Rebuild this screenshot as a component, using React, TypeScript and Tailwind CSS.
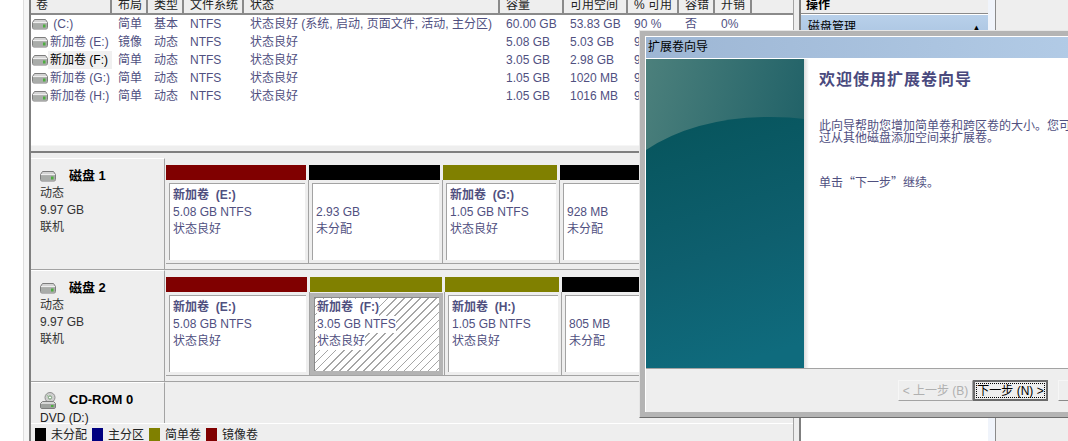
import React from "react";

const FONT = "[font-family:'Liberation_Sans','Noto_Sans_CJK_SC',sans-serif]";

function DiskIcon() {
  return (
    <svg width="16" height="11" viewBox="0 0 16 11" className="shrink-0">
      <path d="M2.5 0.5 H13.5 L15.5 3.5 V8.5 Q15.5 10 14 10 H2 Q0.5 10 0.5 8.5 V3.5 Z" fill="#d4d4d4" stroke="#7d7d7d" />
      <rect x="1" y="4" width="14" height="5.5" fill="#a9aca9" />
      <path d="M1 3.6 H15" stroke="#f2f2f2" />
      <rect x="11" y="5.5" width="2.5" height="3" fill="#4cae3f" />
    </svg>
  );
}

function CdIcon() {
  return (
    <svg width="16" height="17" viewBox="0 0 16 17" className="shrink-0">
      <circle cx="10" cy="5.5" r="5" fill="#cfcfcf" stroke="#8f8f8f" />
      <circle cx="10" cy="5.5" r="1.6" fill="#ffffff" stroke="#6f9a6f" />
      <path d="M6.5 3 L9 5" stroke="#8dbb8d" />
      <path d="M2.5 9.5 H13.5 L15.5 11.5 V15 Q15.5 16.5 14 16.5 H2 Q0.5 16.5 0.5 15 V11.5 Z" fill="#d8d8d8" stroke="#7d7d7d" />
      <rect x="1" y="12" width="14" height="4" fill="#9fa29f" />
      <rect x="11" y="13" width="2.5" height="2" fill="#4cae3f" />
    </svg>
  );
}

const headers = [
  ["卷", "w-[81px] pl-[5px]"],
  ["布局", "w-[36px] pl-[6px]"],
  ["类型", "w-[36px] pl-[6px]"],
  ["文件系统", "w-[60px] pl-[6px]"],
  ["状态", "w-[256px] pl-[6px]"],
  ["容量", "w-[64px] pl-[6px]"],
  ["可用空间", "w-[64px] pl-[6px]"],
  ["% 可用", "w-[51px] pl-[6px]"],
  ["容错", "w-[36px] pl-[6px]"],
  ["开销", "w-[37px] pl-[6px]"],
];

const rows = [
  [" (C:)", "简单", "基本", "NTFS", "状态良好 (系统, 启动, 页面文件, 活动, 主分区)", "60.00 GB", "53.83 GB", "90 %", "否", "0%"],
  ["新加卷 (E:)", "镜像", "动态", "NTFS", "状态良好", "5.08 GB", "5.03 GB", "99 %", "是", "50%"],
  ["新加卷 (F:)", "简单", "动态", "NTFS", "状态良好", "3.05 GB", "2.98 GB", "98 %", "否", "0%"],
  ["新加卷 (G:)", "简单", "动态", "NTFS", "状态良好", "1.05 GB", "1020 MB", "95 %", "否", "0%"],
  ["新加卷 (H:)", "简单", "动态", "NTFS", "状态良好", "1.05 GB", "1016 MB", "95 %", "否", "0%"],
];

type Part = { w: string; bar: string; name?: string; size: string; status: string; selected?: boolean };

const disk1: Part[] = [
  { w: "w-[143px]", bar: "bg-[#800000]", name: "新加卷  (E:)", size: "5.08 GB NTFS", status: "状态良好" },
  { w: "w-[134px]", bar: "bg-black", size: "2.93 GB", status: "未分配" },
  { w: "w-[117px]", bar: "bg-[#808000]", name: "新加卷  (G:)", size: "1.05 GB NTFS", status: "状态良好" },
  { w: "w-[100px]", bar: "bg-black", size: "928 MB", status: "未分配" },
];

const disk2: Part[] = [
  { w: "w-[144px]", bar: "bg-[#800000]", name: "新加卷  (E:)", size: "5.08 GB NTFS", status: "状态良好" },
  { w: "w-[135px]", bar: "bg-[#808000]", name: "新加卷  (F:)", size: "3.05 GB NTFS", status: "状态良好", selected: true },
  { w: "w-[117px]", bar: "bg-[#808000]", name: "新加卷  (H:)", size: "1.05 GB NTFS", status: "状态良好" },
  { w: "w-[100px]", bar: "bg-black", size: "805 MB", status: "未分配" },
];

function Partition({ p }: { p: Part }) {
  return (
    <div className={`${p.w} shrink-0 flex flex-col`}>
      <div className={`${p.bar} h-[15px] mr-[3px]`} />
      {p.selected ? (
        <div className="h-[84px] border-r border-b border-[#a3a3a3] pt-px pr-px bg-[#eeeeee]">
          <div className="h-full border-[4px] border-[#b4b4b4]">
            <div className="h-full border-l border-t border-[#8a8a8a] pl-[2px] pt-px leading-[17px] text-[#50507f] bg-[repeating-linear-gradient(135deg,#a6a6a6_0,#a6a6a6_1px,#ffffff_1px,#ffffff_5.7px)]">
              <div className="font-bold whitespace-pre h-[17px] bg-white w-fit">{p.name}</div>
              <div className="h-[17px] bg-white w-fit">{p.size}</div>
              <div className="h-[17px] bg-white w-fit">{p.status}</div>
            </div>
          </div>
        </div>
      ) : (
        <div className="h-[84px] border-r border-b border-[#a3a3a3] p-[3px] bg-[#eeeeee]">
          <div className="h-full border-l border-t border-[#a3a3a3] bg-white pl-[3px] pt-[3px] leading-[17px] text-[#50507f]">
            <div className="font-bold whitespace-pre h-[17px]">{p.name ?? ""}</div>
            <div className="h-[17px]">{p.size}</div>
            <div className="h-[17px]">{p.status}</div>
          </div>
        </div>
      )}
    </div>
  );
}

function DiskRow({ name, parts }: { name: string; parts: Part[] }) {
  return (
    <div className="flex h-[112px] shrink-0 border-b border-[#a3a3a3] overflow-hidden">
      <div className="w-[134px] shrink-0 border-r border-t border-t-white border-r-[#a3a3a3] pl-[9px] pt-[8px] text-[#333333]">
        <div className="flex items-center h-[18px] gap-[13px]">
          <DiskIcon />
          <span className="font-bold text-[13px] text-black">{name}</span>
        </div>
        <div className="leading-[17px]">动态</div>
        <div className="leading-[17px]">9.97 GB</div>
        <div className="leading-[17px]">联机</div>
      </div>
      <div className="flex pl-px pt-[7px]">
        {parts.map((p, i) => (
          <Partition key={i} p={p} />
        ))}
      </div>
    </div>
  );
}

const legend = [
  ["bg-black", "未分配"],
  ["bg-[#000080]", "主分区"],
  ["bg-[#808000]", "简单卷"],
  ["bg-[#800000]", "镜像卷"],
];

export default function App() {
  return (
    <div className={`${FONT} relative w-[1068px] h-[441px] overflow-hidden bg-[#eeeeee] flex text-[12px] leading-[18px]`}>
      <div className="w-[23px] shrink-0 bg-white" />
      <div className="w-[6px] shrink-0 bg-[#f6f6f6] border-l border-[#dedede]" />

      {/* Main column */}
      <div className="w-[765px] shrink-0 flex flex-col border-l-2 border-r border-l-[#7f7f7f] border-r-[#a3a3a3]">
        <div className="h-[145px] shrink-0 bg-white">
          <div className="flex h-[15px] bg-[#eeeeee] overflow-hidden">
            {headers.map(([t, w]) => (
              <div key={t} className={`${w} shrink-0 h-[15px] border-r-2 border-b-2 border-[#8a8a8a] leading-[10px] text-[#222222]`}>
                {t}
              </div>
            ))}
            <div className="flex-1 border-b-2 border-[#8a8a8a]" />
          </div>
          {rows.map((r, idx) => (
            <div key={idx} className="flex h-[18px] text-[#50507f]">
              {r.map((c, i) => {
                const w = headers[i][1];
                if (i === 0) {
                  return (
                    <div key={i} className="w-[81px] shrink-0 flex items-center pl-px">
                      <DiskIcon />
                      <span className={`pl-[2px] whitespace-pre flex-1 h-[18px] ${idx === 2 ? "bg-[#f0f0f0] text-black" : ""}`}>{c}</span>
                    </div>
                  );
                }
                return (
                  <div key={i} className={`${w} shrink-0 whitespace-nowrap overflow-hidden`}>
                    {c}
                  </div>
                );
              })}
            </div>
          ))}
        </div>
        <div className="h-[6px] shrink-0 border-t border-[#f6f6f6]" />
        <div className="h-[2px] shrink-0 bg-[#7f7f7f]" />
        <div className="h-[5px] shrink-0" />

        <DiskRow name="磁盘 1" parts={disk1} />
        <DiskRow name="磁盘 2" parts={disk2} />

        <div className="flex h-[42px] shrink-0 border-b border-white">
          <div className="w-[134px] shrink-0 border-r border-t border-t-white border-r-[#a3a3a3] pl-[9px] pt-[7px] text-[#222222]">
            <div className="flex items-center h-[20px] gap-[13px]">
              <CdIcon />
              <span className="font-bold text-[13px] text-black">CD-ROM 0</span>
            </div>
            <div className="leading-[16px]">DVD (D:)</div>
          </div>
        </div>

        <div className="flex items-center h-[17px] pl-[4px] pt-[4px] text-[#222222]">
          {legend.map(([c, t]) => (
            <div key={t} className="flex items-center w-[57px] shrink-0 gap-[5px]">
              <div className={`${c} w-[11px] h-[13px] shrink-0`} />
              <span>{t}</span>
            </div>
          ))}
        </div>
      </div>

      <div className="w-[5px] shrink-0" />

      {/* Action pane */}
      <div className="w-[197px] shrink-0 flex border-l-2 border-r border-l-[#7f7f7f] border-r-[#8a8a8a] bg-white">
        <div className="w-[187px] shrink-0 flex flex-col">
          <div className="h-[14px] bg-[#eeeeee] border-b border-[#8a8a8a] pl-[5px] leading-[10px] font-bold text-black text-[12px]">操作</div>
          <div className="h-[28px] mt-px bg-[linear-gradient(#b8d0ea,#a9c3e0)] pl-[7px] pt-[3px] flex justify-between pr-[6px] text-black">
            <span>磁盘管理</span>
            <span className="text-[11px] leading-[20px]">▲</span>
          </div>
        </div>
        <div className="flex-1 bg-[#f0f4fb]" />
      </div>

      {/* Wizard window */}
      <div className="absolute left-[639px] top-[30px] w-[440px] h-[388px] flex flex-col border-l border-t border-b border-l-[#e6e6e6] border-t-[#e6e6e6] border-b-[#6e6e6e] bg-[#b4b4b4] pl-[5px] pt-[5px] pb-[5px]">
        <div className="flex-1 flex flex-col border-l border-t border-white bg-[#eeeeee] min-h-0">
          <div className="h-[21px] shrink-0 border-b border-white bg-[linear-gradient(90deg,#9db6d4,#b2cbe6)] pl-[2px] leading-[21px] text-black box-content">扩展卷向导</div>
          <div className="h-[309px] shrink-0 flex bg-white border-b border-[#a3a3a3] box-content">
            <div className="w-[158px] shrink-0">
              <svg width="158" height="309" viewBox="0 0 158 309" className="block">
                <defs>
                  <linearGradient id="sky" x1="0" y1="0" x2="1" y2="0.45">
                    <stop offset="0" stopColor="#4c807c" />
                    <stop offset="1" stopColor="#1d5f66" />
                  </linearGradient>
                  <linearGradient id="sea" x1="0.3" y1="0" x2="0.5" y2="1">
                    <stop offset="0" stopColor="#07555d" />
                    <stop offset="0.55" stopColor="#0e5f6e" />
                    <stop offset="1" stopColor="#0f6b7d" />
                  </linearGradient>
                </defs>
                <rect width="158" height="309" fill="url(#sky)" />
                <path d="M0 91 Q50 58 125 58 Q145 58 158 60 V309 H0 Z" fill="url(#sea)" />
              </svg>
            </div>
            <div className="flex-1 flex flex-col overflow-hidden relative pl-[15px] bg-[linear-gradient(90deg,#dcdcdc,#ffffff_5px)]">
              <div className="text-[16px] tracking-[1px] font-bold text-[#4a4a7e] leading-[20px] mt-[11px] whitespace-nowrap">欢迎使用扩展卷向导</div>
              <div className="mt-[30px] leading-[12px] text-[#50507f] whitespace-nowrap">
                <div>此向导帮助您增加简单卷和跨区卷的大小。您可以通</div>
                <div>过从其他磁盘添加空间来扩展卷。</div>
              </div>
              <div className="mt-[32px] leading-[12px] text-[#50507f] whitespace-nowrap [font-family:'Noto_Sans_CJK_SC',sans-serif]">单击“下一步”继续。</div>
            </div>
          </div>
          <div className="flex-1 flex items-start pt-[11px] pl-[252px]">
            <div className="w-[75px] h-[21px] shrink-0 border border-t-[#f6f6f6] border-l-[#f6f6f6] border-r-[#a3a3a3] border-b-[#a3a3a3] flex items-center justify-center text-[#b0b0b0] whitespace-nowrap">&lt; 上一步 (B)</div>
            <div className="w-[75px] h-[21px] shrink-0 border-2 border-[#6a6a6a] p-px">
              <div className="h-full border border-dotted border-black flex items-center justify-center text-black leading-none whitespace-nowrap">下一步 (N) &gt;</div>
            </div>
            <div className="w-[40px] h-[21px] shrink-0 ml-[10px] border border-t-[#f6f6f6] border-l-[#f6f6f6] border-b-[#8a8a8a] border-r-[#8a8a8a]" />
          </div>
        </div>
      </div>
    </div>
  );
}
